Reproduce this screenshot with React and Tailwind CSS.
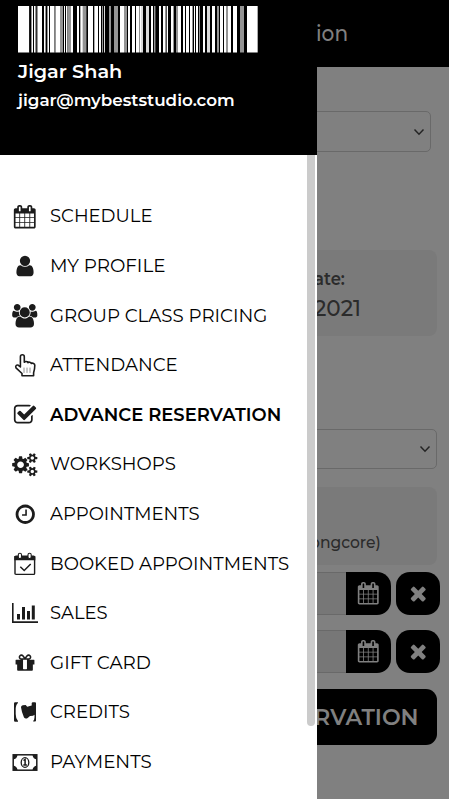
import React, { useLayoutEffect, useRef, useState } from "react";

// Keeps a line of text at a fixed advance width.
function Fit({ w, children, className = "" }) {
  const ref = useRef(null);
  const [s, setS] = useState(1);
  useLayoutEffect(() => {
    setS(w / ref.current.offsetWidth);
  }, [w]);
  return (
    <span className={"inline-block whitespace-nowrap " + className} style={{ width: w }}>
      <span ref={ref} className="inline-block origin-left" style={{ transform: `scaleX(${s})` }}>{children}</span>
    </span>
  );
}

const P = {
  calendar: "M192 1664h288v-288h-288v288zm352 0h320v-288h-320v288zm-352-352h288v-320h-288v320zm352 0h320v-320h-320v320zm-352-384h288v-288h-288v288zm736 736h320v-288h-320v288zm-384-736h320v-288h-320v288zm768 736h288v-288h-288v288zm-384-352h320v-320h-320v320zm-352-864v-288q0-13-9.5-22.5t-22.5-9.5h-64q-13 0-22.5 9.5t-9.5 22.5v288q0 13 9.5 22.5t22.5 9.5h64q13 0 22.5-9.5t9.5-22.5zm736 864h288v-320h-288v320zm-384-384h320v-288h-320v288zm384 0h288v-288h-288v288zm32-480v-288q0-13-9.5-22.5t-22.5-9.5h-64q-13 0-22.5 9.5t-9.5 22.5v288q0 13 9.5 22.5t22.5 9.5h64q13 0 22.5-9.5t9.5-22.5zm384-64v1280q0 52-38 90t-90 38h-1408q-52 0-90-38t-38-90v-1280q0-52 38-90t90-38h128v-96q0-66 47-113t113-47h64q66 0 113 47t47 113v96h384v-96q0-66 47-113t113-47h64q66 0 113 47t47 113v96h128q52 0 90 38t38 90z",
  user: "M1536 1399q0 109-62.5 187t-150.5 78h-854q-88 0-150.5-78t-62.5-187q0-85 8.5-160.5t31.5-152 58.5-131 94-89 134.5-34.5q131 128 313 128t313-128q76 0 134.5 34.5t94 89 58.5 131 31.5 152 8.5 160.5zm-256-887q0 159-112.5 271.5t-271.5 112.5-271.5-112.5-112.5-271.5 112.5-271.5 271.5-112.5 271.5 112.5 112.5 271.5z",
  users: "M529 896q-162 5-265 128h-134q-82 0-138-40.5t-56-118.5q0-353 124-353 6 0 43.5 21t97.5 42.5 119 21.5q67 0 133-23-5 37-5 66 0 139 81 256zm1071 637q0 120-73 189.5t-194 69.5h-874q-121 0-194-69.5t-73-189.5q0-53 3.5-103.5t14-109 26.5-108.5 43-97.5 62-81 85.5-53.5 111.5-20q10 0 43 21.5t73 48 107 48 135 21.5 135-21.5 107-48 73-48 43-21.5q61 0 111.5 20t85.5 53.5 62 81 43 97.5 26.5 108.5 14 109 3.5 103.5zm-1024-1277q0 106-75 181t-181 75-181-75-75-181 75-181 181-75 181 75 75 181zm704 384q0 159-112.5 271.5t-271.5 112.5-271.5-112.5-112.5-271.5 112.5-271.5 271.5-112.5 271.5 112.5 112.5 271.5zm576 225q0 78-56 118.5t-138 40.5h-134q-103-123-265-128 81-117 81-256 0-29-5-66 66 23 133 23 59 0 119-21.5t97.5-42.5 43.5-21q124 0 124 353zm-128-609q0 106-75 181t-181 75-181-75-75-181 75-181 181-75 181 75 75 181z",
  check: "M1472 930v318q0 119-84.5 203.5t-203.5 84.5h-832q-119 0-203.5-84.5t-84.5-203.5v-832q0-119 84.5-203.5t203.5-84.5h832q63 0 117 25 15 7 18 23 3 17-9 29l-49 49q-10 10-23 10-3 0-9-2-23-6-45-6h-832q-66 0-113 47t-47 113v832q0 66 47 113t113 47h832q66 0 113-47t47-113v-254q0-13 9-22l64-64q10-10 23-10 6 0 12 3 20 8 20 29zm231-489l-814 814q-24 24-57 24t-57-24l-430-430q-24-24-24-57t24-57l110-110q24-24 57-24t57 24l263 263 647-647q24-24 57-24t57 24l110 110q24 24 24 57t-24 57z",
  cogs: "M832 896q0-106-75-181t-181-75-181 75-75 181 75 181 181 75 181-75 75-181zm768 512q0-52-38-90t-90-38-90 38-38 90q0 53 37.5 90.5t90.5 37.5 90.5-37.5 37.5-90.5zm0-1024q0-52-38-90t-90-38-90 38-38 90q0 53 37.5 90.5t90.5 37.5 90.5-37.5 37.5-90.5zm-384 421v185q0 10-7 19.5t-16 10.5l-155 24q-11 35-32 76 34 48 90 115 7 11 7 20 0 12-7 19-23 30-82.5 89.5t-78.5 59.5q-11 0-21-7l-115-90q-37 19-77 31-11 108-23 155-7 24-30 24h-186q-11 0-20-7.5t-10-17.5l-23-153q-34-10-75-31l-118 89q-7 7-20 7-11 0-21-8-144-133-144-160 0-9 7-19 10-14 41-53t47-61q-23-44-35-82l-152-24q-10-1-17-9.5t-7-19.5v-185q0-10 7-19.5t16-10.5l155-24q11-35 32-76-34-48-90-115-7-11-7-20 0-12 7-20 22-30 82-89t79-59q11 0 21 7l115 90q34-18 77-32 11-108 23-154 7-24 30-24h186q11 0 20 7.5t10 17.5l23 153q34 10 75 31l118-89q8-7 20-7 11 0 21 8 144 133 144 160 0 8-7 19-12 16-42 54t-45 60q23 48 34 82l152 23q10 2 17 10.5t7 19.5zm640 533v140q0 16-149 31-12 27-30 52 51 113 51 138 0 4-4 7-122 71-124 71-8 0-46-47t-52-68q-20 2-30 2t-30-2q-14 21-52 68t-46 47q-2 0-124-71-4-3-4-7 0-25 51-138-18-25-30-52-149-15-149-31v-140q0-16 149-31 13-29 30-52-51-113-51-138 0-4 4-7 4-2 35-20t59-34 30-16q8 0 46 46.5t52 67.5q20-2 30-2t30 2q51-71 92-112l6-2q4 0 124 70 4 3 4 7 0 25-51 138 17 23 30 52 149 15 149 31zm0-1024v140q0 16-149 31-12 27-30 52 51 113 51 138 0 4-4 7-122 71-124 71-8 0-46-47t-52-68q-20 2-30 2t-30-2q-14 21-52 68t-46 47q-2 0-124-71-4-3-4-7 0-25 51-138-18-25-30-52-149-15-149-31v-140q0-16 149-31 13-29 30-52-51-113-51-138 0-4 4-7 4-2 35-20t59-34 30-16q8 0 46 46.5t52 67.5q20-2 30-2t30 2q51-71 92-112l6-2q4 0 124 70 4 3 4 7 0 25-51 138 17 23 30 52 149 15 149 31z",
  clock: "M1024 544v448q0 14-9 23t-23 9h-320q-14 0-23-9t-9-23v-64q0-14 9-23t23-9h224v-352q0-14 9-23t23-9h64q14 0 23 9t9 23zm416 352q0-148-73-273t-198-198-273-73-273 73-198 198-73 273 73 273 198 198 273 73 273-73 198-198 73-273zm224 0q0 209-103 385.5t-279.5 279.5-385.5 103-385.5-103-279.5-279.5-103-385.5 103-385.5 279.5-279.5 385.5-103 385.5 103 279.5 279.5 103 385.5z",
  times: "M1490 1322q0 40-28 68l-136 136q-28 28-68 28t-68-28l-294-294-294 294q-28 28-68 28t-68-28l-136-136q-28-28-28-68t28-68l294-294-294-294q-28-28-28-68t28-68l136-136q28-28 68-28t68 28l294 294 294-294q28-28 68-28t68 28l136 136q28 28 28 68t-28 68l-294 294 294 294q28 28 28 68z",
  gift: "M1056 1356v-716h-320v716q0 25 18 38.5t46 13.5h192q28 0 46-13.5t18-38.5zm-456-844h195l-126-161q-26-31-69-31-40 0-68 28t-28 68 28 68 68 28zm688-96q0-40-28-68t-68-28q-43 0-69 31l-125 161h194q40 0 68-28t28-68zm376 256v320q0 14-9 23t-23 9h-96v416q0 40-28 68t-68 28h-1088q-40 0-68-28t-28-68v-416h-96q-14 0-23-9t-9-23v-320q0-14 9-23t23-9h440q-93 0-158.5-65.5t-65.5-158.5 65.5-158.5 158.5-65.5q107 0 168 77l128 165 128-165q61-77 168-77 93 0 158.5 65.5t65.5 158.5-65.5 158.5-158.5 65.5h440q14 0 23 9t9 23z",
};

function Fa({ d, size = 24 }) {
  return <svg width={size} height={size} viewBox="0 0 1792 1792" className="shrink-0 overflow-visible" fill="currentColor"><path d={d} /></svg>;
}

function Hand() {
  return (
    <svg width="24" height="26" viewBox="0 0 24 26" className="shrink-0" fill="none" stroke="currentColor" strokeWidth="1.6" strokeLinejoin="round" strokeLinecap="round">
      <path d="M7.4 15V4.700a1.900 1.900 0 0 1 3.900 0v5.600c.6-1.200 3.400-1 3.600.3.8-.8 3-.5 3.300.8 1.500-.6 3.600 0 3.600 1.900 0 3.700-.2 4.400-1.200 7.500v3H9v-2.300L3 15.800c-.9-1.800.6-3.400 2.400-2.500z" />
      <path strokeWidth=".8" stroke="#777" d="M11 16v4.500M14 16v4.500M17 16v4.500" />
    </svg>
  );
}

function CalendarCheck() {
  return (
    <svg width="24" height="24" viewBox="0 0 24 24" className="shrink-0" fill="none" stroke="currentColor">
      <rect x="2" y="4.200" width="19.600" height="18.200" rx="1" strokeWidth="1.400" />
      <path d="M1.300 4h21v4.200h-21z" fill="currentColor" stroke="none" />
      <rect x="5.300" y="1.200" width="3.200" height="5.400" rx="1.500" fill="#fff" strokeWidth="1.100" />
      <rect x="15" y="1.200" width="3.200" height="5.400" rx="1.500" fill="#fff" strokeWidth="1.100" />
      <path d="M7.300 14.800l3.900 3.700 6.500-6.500" strokeWidth="1.500" />
    </svg>
  );
}

function Bars() {
  return (
    <svg width="26" height="20" viewBox="0 0 26 20" className="shrink-0" fill="currentColor">
      <path d="M0 0h1.600v18.200H26V20H0zM5 11h3v5.500H5zM10 4h3v12.500h-3zM15 8h3v8.500h-3zM19.800 2.500h3v14h-3z" />
    </svg>
  );
}

function Credits() {
  return (
    <svg width="24" height="20" viewBox="0 0 24 20" className="shrink-0" fill="currentColor">
      <path d="M1 1.500Q1 .3 2.200.3H5V1Q2.700 2.500 2.700 8v4q0 4.500 2.300 7v.7H2.200Q1 19.700 1 18.500z" />
      <path d="M8 5.200Q8 3.500 9.700 3.200l3-.2 1.500 1.700 4.500-1.200V1l.8-.7H22q1 0 1 1v17.200q0 1-1 1h-1.800v-.8q1.200-.7 1.300-3.500v-2.400q-1 1.400-4.500 1.300l-2.300 1.800q-2.200 1.300-3.700-.5L9 10z" />
    </svg>
  );
}

function Money() {
  return (
    <svg width="26" height="17" viewBox="0 0 26 17" className="shrink-0" fill="none" stroke="currentColor">
      <rect x="1.200" y=".8" width="23.600" height="15.400" strokeWidth="1.500" />
      <path d="M1 1h4.500Q5 5 1 5.500zM25 1v4.500Q21 5 20.500 1zM1 16v-4.500Q5 12 5.500 16zM25 16h-4.500Q21 12 25 11.500z" fill="currentColor" stroke="none" />
      <ellipse cx="13" cy="8.500" rx="3.800" ry="4.900" strokeWidth="1.300" />
      <path d="M11.500 6.500l1.600-1.100v5.300M11.300 11h3.600" strokeWidth="1.500" />
    </svg>
  );
}

const MENU = [
  ["SCHEDULE", 103, <Fa d={P.calendar} size={23.5} />],
  ["MY PROFILE", 115, <Fa d={P.user} />],
  ["GROUP CLASS PRICING", 217, <Fa d={P.users} size={23.5} />],
  ["ATTENDANCE", 128, <Hand />],
  ["ADVANCE RESERVATION", 231.5, <Fa d={P.check} />],
  ["WORKSHOPS", 126, <Fa d={P.cogs} size={23.5} />],
  ["APPOINTMENTS", 150, <Fa d={P.clock} size={22.5} />],
  ["BOOKED APPOINTMENTS", 239, <CalendarCheck />],
  ["SALES", 58, <Bars />],
  ["GIFT CARD", 100.5, <Fa d={P.gift} size={22} />],
  ["CREDITS", 80, <Credits />],
  ["PAYMENTS", 102, <Money />],
];

// Barcode stripes as "end position, shade" pairs, in thirds of a pixel from the left edge.
const STRIPES = "34w 39k 42g 45w 48k 51w 54g 56k 59g 72w 78k 81w 84g 87k 90g 93w 96k 109w 113g 126w 135g 138k 141w 144k 148w 158g 165w 177k 183w 187k 192w 195l 206g 210k 225w 229k 240w 243k 249w 252k 255g 258k 261l 273k 279g 288k 300g 306k 318w 327g 330k 336w 342k 351w 354k 363w 366g 369w 375l 384k 393l 399k 405w 408k 413g 423k 429w 435k 441w 444g 446k 450w 459k 465w 468g 474k 480g 489w 495k 501w 504k 513w 516k 522w 525g 528k 531w 534k 540w 543k 546g 555k 561w 567k 576l 582k 591w 597k 603g 606k 615w 618k 624w 630g 639w 645k 657w 666k 678g 687k 719w";
const SHADE = { w: "#fff", l: "#dadada", g: "#949494", k: "#000" };

function Barcode() {
  let from = 0;
  return (
    <svg width="240" height="47" viewBox="0 0 720 47" preserveAspectRatio="none" className="block">
      {STRIPES.split(" ").map((s) => {
        const end = parseInt(s, 10);
        const r = <rect key={s} x={from} y="0" width={end - from} height="46.500" fill={SHADE[s.slice(-1)]} />;
        from = end;
        return r;
      })}
    </svg>
  );
}

function Chevron() {
  return <svg width="12" height="8" viewBox="0 0 12 8" fill="none" stroke="#242424" strokeWidth="1.500"><path d="M1.500 1.500L6 6.200l4.500-4.700" /></svg>;
}

function DateRow({ className }) {
  return (
    <div className={"flex h-[43px] w-[440px] " + className}>
      <div className="ml-3 flex-1 border-y border-[#696969] bg-[#777]" />
      <div className="flex w-[45px] items-center justify-center rounded-r-[14px] bg-black text-[#808080]"><Fa d={P.calendar} size={22.5} /></div>
      <div className="ml-[5px] flex w-11 items-center justify-center rounded-[14px] bg-black text-[#808080]"><Fa d={P.times} size={22.5} /></div>
    </div>
  );
}

export default function App() {
  return (
    <div className="relative h-[800px] w-[450px] overflow-hidden bg-white font-['Montserrat','Inter',sans-serif]">
      <div className="h-[799px] w-[449px] overflow-hidden bg-[#808080] text-[#2b2b2b]">
        <header className="flex h-[67px] justify-end bg-black pr-[101px] text-[22px] font-medium leading-[67px] text-[#808080]">
          <Fit w={32}>ion</Fit>
        </header>
        <div className="ml-3 mt-[44px] flex h-[41px] w-[419px] items-center justify-end rounded-[5px] border border-[#696969] pr-[5px]"><Chevron /></div>
        <section className="ml-3 mt-[98px] flex h-[86px] w-[425px] flex-col rounded-lg bg-[#7a7a7a]">
          <div className="mt-[17px] flex h-6 justify-end pr-[92px] text-[18px] font-semibold leading-6"><Fit w={31}>ate:</Fit></div>
          <div className="mt-[3px] flex h-[30px] justify-end pr-[76px] text-[22px] font-medium leading-[30px]"><Fit w={47}>2021</Fit></div>
        </section>
        <div className="ml-3 mt-[93px] flex h-10 w-[425px] items-center justify-end rounded-[5px] border border-[#696969] pr-[5px]"><Chevron /></div>
        <section className="ml-3 mt-[18px] flex h-[78px] w-[425px] items-end justify-end rounded-lg bg-[#7a7a7a] pb-[12px] pr-[56px] text-[16px] font-medium leading-5">
          <Fit w={71}>ongcore)</Fit>
        </section>
        <DateRow className="mt-[6.5px]" />
        <DateRow className="mt-[15.5px]" />
        <div className="ml-3 mt-[15.5px] flex h-14 w-[425px] justify-end rounded-[11px] bg-black pr-[18.5px] text-[22px] font-semibold leading-[57px] text-[#808080]">
          <Fit w={105}>RVATION</Fit>
        </div>
      </div>

      <aside className="absolute left-0 top-0 flex h-[800px] w-[317px] flex-col bg-white">
        <div className="h-[155px] bg-black pl-[18px] pt-[6px] text-white">
          <Barcode />
          <div className="mt-[7px] h-6 text-[18.5px] font-semibold leading-6"><Fit w={104}>Jigar Shah</Fit></div>
          <div className="mt-[4px] h-6 text-[16.5px] font-semibold leading-6"><Fit w={216.5}>jigar@mybeststudio.com</Fit></div>
        </div>
        <div className="flex min-h-0 flex-1">
          <nav className="flex flex-1 flex-col pt-[36.5px] text-black">
            {MENU.map(([label, w, icon]) => (
              <div key={label} className="flex h-[49.620px] shrink-0 items-center">
                <div className="flex w-[50px] shrink-0 items-center justify-center text-[#1c1c1c]">{icon}</div>
                <Fit w={w} className={label === "ADVANCE RESERVATION" ? "text-[17.700px] font-semibold leading-6" : "text-[17.700px] leading-6"}>{label}</Fit>
              </div>
            ))}
          </nav>
          <div className="mr-[2px] h-[571px] w-[8px] rounded-b bg-[#cbcbcb]" />
        </div>
      </aside>
    </div>
  );
}
